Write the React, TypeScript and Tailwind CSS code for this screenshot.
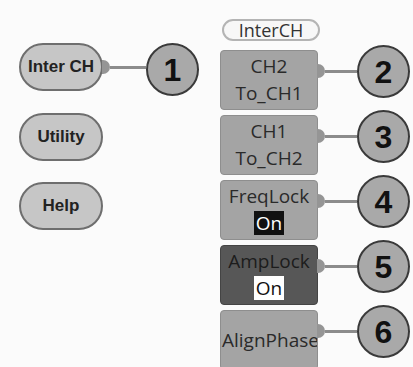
const circle =
  "w-[53px] h-[53px] shrink-0 rounded-full bg-[#a9a9a9] border-2 border-[#3a3a3a] flex items-center justify-center text-[32px] font-bold text-[#111] font-['Liberation_Sans',sans-serif] leading-none";

const pill =
  "w-[84px] h-[48px] rounded-full bg-[#c6c6c6] border-2 border-[#6e6e6e] flex items-center justify-center text-[17px] font-bold text-[#222] font-['Liberation_Sans',sans-serif]";

function Connector({ width, top }: { width: string; top: string }) {
  return (
    <div className={`flex items-center shrink-0 ${width} ${top}`}>
      <div className="w-[8px] h-[14px] -ml-[1px] rounded-r-full bg-[#959595]" />
      <div className="flex-1 h-[3px] bg-[#8c8c8c]" />
    </div>
  );
}

type Item = {
  lines: string[];
  on?: "dark" | "light";
  dark?: boolean;
  n: number;
};

const items: Item[] = [
  { lines: ["CH2", "To_CH1"], n: 2 },
  { lines: ["CH1", "To_CH2"], n: 3 },
  { lines: ["FreqLock"], on: "dark", n: 4 },
  { lines: ["AmpLock"], on: "light", dark: true, n: 5 },
  { lines: ["AlignPhase"], n: 6 },
];

export default function App() {
  return (
    <div className="w-[413px] h-[367px] overflow-hidden bg-[#fbfbfb] flex font-['Open_Sans',sans-serif]">
      <div className="pl-[19px] pt-[43px] flex flex-col w-[220px] shrink-0">
        <div className="flex items-start">
          <div className={pill}>Inter CH</div>
          <Connector width="w-[43px]" top="mt-[17px]" />
          <div className={circle}>1</div>
        </div>
        <div className={`${pill} mt-[17px]`}>Utility</div>
        <div className={`${pill} mt-[21px]`}>Help</div>
      </div>

      <div className="pt-[19px] flex flex-col">
        <div className="ml-[2px] w-[98px] h-[24px] rounded-full bg-[#f7f7f7] border-2 border-[#b4b4b4] flex items-center justify-center text-[18px] text-[#333] leading-none">
          InterCH
        </div>
        <div className="mt-[9px] flex flex-col gap-[5px]">
          {items.map((it) => (
            <div key={it.n} className="flex items-start">
              <div
                className={`w-[98px] h-[60px] shrink-0 overflow-hidden rounded-[4px] border flex flex-col items-center ${
                  it.lines.length === 1 && !it.on ? "justify-center" : "pt-[2px]"
                } text-[19px] leading-[27px] whitespace-nowrap ${
                  it.dark
                    ? "bg-[#575757] border-[#444] text-[#1c1c1c]"
                    : "bg-[#a4a4a4] border-[#8e8e8e] text-[#2a2a2a]"
                }`}
              >
                {it.lines.map((l) => (
                  <div key={l} className={it.lines.length === 1 && !it.on ? "w-full pl-[1px]" : ""}>
                    {l}
                  </div>
                ))}
                {it.on && (
                  <div
                    className={`mt-[1px] px-[2px] leading-[24px] ${
                      it.on === "dark" ? "bg-[#111] text-white" : "bg-white text-[#111]"
                    }`}
                  >
                    On
                  </div>
                )}
              </div>
              <Connector width="w-[39px]" top="mt-[14px]" />
              <div className={`${circle} -mt-[5px]`}>{it.n}</div>
            </div>
          ))}
        </div>
      </div>
    </div>
  );
}
